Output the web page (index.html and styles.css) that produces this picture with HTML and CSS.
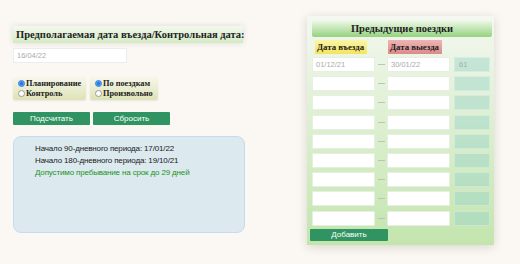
FILE: index.html
```html
<!DOCTYPE html>
<html lang="ru">
<head>
<meta charset="utf-8">
<link rel="stylesheet" href="styles.css">
</head>
<body>
<div class="page">
  <div class="left">
    <div class="title">Предполагаемая дата въезда/Контрольная дата:</div>
    <div class="date-input">16/04/22</div>
    <div class="radios">
      <div class="radio-box r1">
        <label class="radio"><span class="dot on"></span>Планирование</label>
        <label class="radio"><span class="dot"></span>Контроль</label>
      </div>
      <div class="radio-box r2">
        <label class="radio"><span class="dot on"></span>По поездкам</label>
        <label class="radio"><span class="dot"></span>Произвольно</label>
      </div>
    </div>
    <div class="buttons">
      <div class="btn">Подсчитать</div>
      <div class="btn">Сбросить</div>
    </div>
    <div class="result">
      <div class="line">Начало 90-дневного периода: 17/01/22</div>
      <div class="line">Начало 180-дневного периода: 19/10/21</div>
      <div class="line ok">Допустимо пребывание на срок до 29 дней</div>
    </div>
  </div>
  <div class="panel">
    <div class="panel-head">Предыдущие поездки</div>
    <div class="labels">
      <span class="lbl in">Дата въезда</span>
      <span class="lbl out">Дата выезда</span>
    </div>
    <div class="rows">
      <div class="row"><div class="field">01/12/21</div><div class="dash"></div><div class="field">30/01/22</div><div class="days">61</div></div>
      <div class="row"><div class="field"></div><div class="dash"></div><div class="field"></div><div class="days"></div></div>
      <div class="row"><div class="field"></div><div class="dash"></div><div class="field"></div><div class="days"></div></div>
      <div class="row"><div class="field"></div><div class="dash"></div><div class="field"></div><div class="days"></div></div>
      <div class="row"><div class="field"></div><div class="dash"></div><div class="field"></div><div class="days"></div></div>
      <div class="row"><div class="field"></div><div class="dash"></div><div class="field"></div><div class="days"></div></div>
      <div class="row"><div class="field"></div><div class="dash"></div><div class="field"></div><div class="days"></div></div>
      <div class="row"><div class="field"></div><div class="dash"></div><div class="field"></div><div class="days"></div></div>
      <div class="row"><div class="field"></div><div class="dash"></div><div class="field"></div><div class="days"></div></div>
    </div>
    <div class="add">Добавить</div>
  </div>
</div>
</body>
</html>
```
FILE: styles.css
```css
html, body {
  margin: 0;
  padding: 0;
}
body {
  background: #fbf8f3;
  width: 520px;
  height: 264px;
  overflow: hidden;
  font-family: "Liberation Serif", serif;
  color: #1a1a1a;
}
.page {
  display: flex;
  align-items: flex-start;
}
.left {
  display: flex;
  flex-direction: column;
  padding: 26px 0 0 13px;
  width: 231px;
}
.title {
  height: 17px;
  width: 230px;
  box-sizing: border-box;
  background: linear-gradient(#f4f9ee, #d3ebc4);
  box-shadow: 0 0 6px rgba(0, 0, 0, 0.12);
  font-size: 10.5px;
  font-weight: bold;
  line-height: 18px;
  padding-left: 3px;
  white-space: nowrap;
  color: #222;
}
.date-input {
  margin-top: 5px;
  width: 114px;
  height: 15px;
  box-sizing: border-box;
  background: #fff;
  border: 1px solid #ececec;
  font-family: "Liberation Sans", sans-serif;
  font-size: 7.5px;
  line-height: 13px;
  color: #aaa;
  padding-left: 3px;
}
.radios {
  display: flex;
  gap: 4px;
  margin-top: 14px;
}
.radio-box {
  height: 23px;
  box-sizing: border-box;
  background: linear-gradient(#f7f7ea, #dde3b6);
  border-radius: 2px;
  box-shadow: 0 1px 2px rgba(0, 0, 0, 0.08);
  padding: 2px 0 0 5px;
  display: flex;
  flex-direction: column;
}
.r1 { width: 73px; }
.r2 { width: 68px; }
.radio {
  display: flex;
  align-items: center;
  font-size: 8.3px;
  font-weight: bold;
  line-height: 9.5px;
  gap: 1px;
  color: #222;
}
.dot {
  width: 7px;
  height: 7px;
  border-radius: 50%;
  background: #fff;
  border: 1px solid #999;
  box-sizing: border-box;
  flex: none;
}
.dot.on {
  background: #1a73e8;
  border: 1px solid #4f8fe0;
  box-shadow: inset 0 0 0 1px #5aa0f5;
}
.buttons {
  display: flex;
  gap: 3px;
  margin-top: 12px;
}
.btn {
  width: 77px;
  height: 13px;
  background: #2f9461;
  color: #fff;
  font-family: "Liberation Sans", sans-serif;
  font-size: 8px;
  line-height: 13px;
  text-align: center;
  border-radius: 1px;
}
.result {
  margin-top: 11px;
  width: 232px;
  height: 97px;
  box-sizing: border-box;
  background: #dce9ef;
  border: 1px solid #c7dbee;
  border-radius: 8px;
  padding: 6px 0 0 21px;
  font-family: "Liberation Sans", sans-serif;
  font-size: 8px;
  letter-spacing: -0.15px;
  line-height: 12px;
  color: #1a1a1a;
}
.result .line {
  white-space: nowrap;
}
.result .ok {
  color: #1a941a;
}
.panel {
  margin: 16px 0 0 63px;
  width: 187px;
  height: 229px;
  box-sizing: border-box;
  padding: 4px 2px 0 5px;
  background: linear-gradient(#f4f8f0, #c3e5ad);
  box-shadow: 0 2px 10px rgba(0, 0, 0, 0.14);
  display: flex;
  flex-direction: column;
}
.panel-head {
  height: 17px;
  width: 180px;
  background: linear-gradient(#f1f9ec, #94d37f);
  border-radius: 2px;
  font-size: 10.5px;
  font-weight: bold;
  line-height: 18px;
  text-align: center;
  color: #222;
}
.labels {
  display: flex;
  margin-top: 3px;
  padding-left: 3px;
  gap: 21px;
}
.lbl {
  height: 14px;
  font-size: 8.8px;
  font-weight: bold;
  line-height: 15px;
  padding: 0 2px;
  box-sizing: border-box;
  color: #222;
}
.lbl.in {
  width: 52px;
  background: linear-gradient(#fbf6a8, #f4e45c);
}
.lbl.out {
  width: 54px;
  background: linear-gradient(#eeb4b4, #dc8a8a);
}
.rows {
  margin-top: 3px;
  display: flex;
  flex-direction: column;
  gap: 4.2px;
}
.row {
  display: flex;
  align-items: center;
  height: 15px;
}
.field {
  width: 63px;
  height: 15px;
  box-sizing: border-box;
  background: #fff;
  border: 1px solid #e6efe2;
  border-radius: 1px;
  font-family: "Liberation Sans", sans-serif;
  font-size: 7.5px;
  line-height: 13px;
  color: #aaa;
  padding-left: 3px;
}
.dash {
  width: 7px;
  height: 1px;
  background: #b9c6b4;
  margin: 0 2px 0 3px;
}
.days {
  width: 36px;
  height: 15px;
  margin-left: 4px;
  box-sizing: border-box;
  background: rgba(150, 210, 200, 0.45);
  border: 1px solid rgba(255, 255, 255, 0.3);
  font-family: "Liberation Sans", sans-serif;
  font-size: 7.5px;
  line-height: 13px;
  color: #aaa;
  padding-left: 4px;
}
.add {
  margin: 3px 0 0 -2px;
  width: 78px;
  height: 12px;
  background: #2f9461;
  color: #fff;
  font-family: "Liberation Sans", sans-serif;
  font-size: 8px;
  line-height: 12px;
  text-align: center;
  border-radius: 1px;
}
```
